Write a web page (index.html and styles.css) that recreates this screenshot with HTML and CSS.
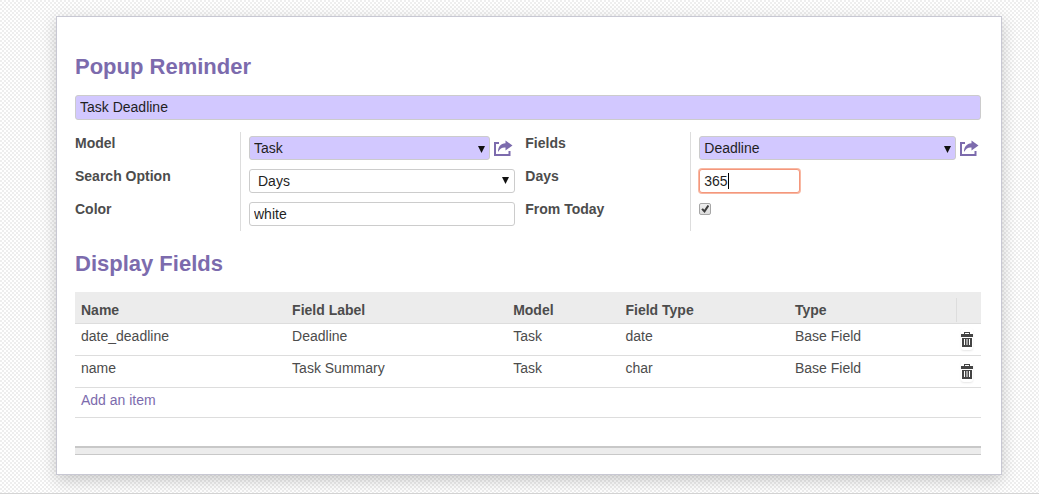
FILE: index.html
```html
<!DOCTYPE html>
<html lang="en">
<head>
<meta charset="utf-8">
<meta name="viewport" content="width=device-width, initial-scale=1">
<title>Popup Reminder</title>
<link rel="stylesheet" href="styles.css">
</head>
<body>
<svg class="symbols" aria-hidden="true">
  <symbol id="share" viewBox="0 0 20 16">
    <path d="M6 3H2v12h14.500v-4" fill="none" stroke="currentColor" stroke-width="2"/>
    <path d="M12.500 0.500L19.500 5.500L12.500 10.500V7.500C9 7.200 7.200 8.500 5 12C4.800 7.500 7.500 3.500 12.500 3.300Z" fill="currentColor"/>
  </symbol>
  <symbol id="trash" viewBox="0 0 12 16">
    <path fill-rule="evenodd" d="M3 1h6v2h3v3H0V3h3zM4 2v1h4V2zM1 7h10v9H1zM3 8v6h1V8zM5.500 8v6h1V8zM8 8v6h1V8z" fill="currentColor"/>
  </symbol>
  <symbol id="arrow" viewBox="0 0 6 6">
    <path d="M0 0h6L3 6z" fill="currentColor"/>
  </symbol>
</svg>
<main class="canvas">
  <form class="sheet">
    <h1 class="heading"><label for="title">Popup Reminder</label></h1>
    <input class="control required title" id="title" type="text" value="Task Deadline">
    <div class="groups">
      <div class="group group-left">
        <div class="labels">
          <label for="model">Model</label>
          <label for="search">Search Option</label>
          <label for="color">Color</label>
        </div>
        <div class="fields">
          <div class="field">
            <div class="select"><select class="control required" id="model"><option>Task</option></select><svg class="arrow low"><use href="#arrow"/></svg></div>
            <button class="open" type="button" aria-label="Open model"><svg class="share"><use href="#share"/></svg></button>
          </div>
          <div class="field">
            <div class="select"><select class="control native" id="search"><option>Days</option></select><svg class="arrow"><use href="#arrow"/></svg></div>
          </div>
          <div class="field"><input class="control" id="color" type="text" value="white"></div>
        </div>
      </div>
      <div class="group group-right">
        <div class="labels">
          <label for="fields">Fields</label>
          <label for="days">Days</label>
          <label for="today">From Today</label>
        </div>
        <div class="fields">
          <div class="field">
            <div class="select"><select class="control required" id="fields"><option>Deadline</option></select><svg class="arrow low"><use href="#arrow"/></svg></div>
            <button class="open" type="button" aria-label="Open field"><svg class="share"><use href="#share"/></svg></button>
          </div>
          <div class="field">
            <div class="number"><input class="control active" id="days" type="text" value="365"><span class="caret"></span></div>
          </div>
          <div class="field"><input class="check" id="today" type="checkbox" checked></div>
        </div>
      </div>
    </div>
    <h2 class="heading">Display Fields</h2>
    <table class="list">
      <colgroup><col class="c-name"><col class="c-label"><col class="c-model"><col class="c-kind"><col class="c-type"><col></colgroup>
      <thead>
        <tr><th>Name</th><th>Field Label</th><th>Model</th><th>Field Type</th><th>Type</th><th class="last"><div class="divider"></div></th></tr>
      </thead>
      <tbody>
        <tr><td>date_deadline</td><td>Deadline</td><td>Task</td><td>date</td><td>Base Field</td><td class="last"><button class="delete" type="button" aria-label="Delete date_deadline"><svg class="trash"><use href="#trash"/></svg></button></td></tr>
        <tr><td>name</td><td>Task Summary</td><td>Task</td><td>char</td><td>Base Field</td><td class="last"><button class="delete" type="button" aria-label="Delete name"><svg class="trash"><use href="#trash"/></svg></button></td></tr>
        <tr class="add"><td colspan="6"><a href="#">Add an item</a></td></tr>
      </tbody>
    </table>
    <div class="footer-bar"></div>
  </form>
</main>
</body>
</html>
```
FILE: styles.css
```css
* { box-sizing: border-box; }
body {
  margin: 0;
  background: #fff;
  color: #4c4c4c;
  font: 14px/22px "Liberation Sans", Arial, sans-serif;
}
.symbols { display: none; }
.canvas {
  padding: 16px 37px 18px 56px;
  border-bottom: 1px solid #d5d5d5;
  background: repeating-conic-gradient(#fff 0 25%, #eee 0 50%) 0 0 / 4px 4px;
}
.sheet {
  padding: 34px 20px 19px 18px;
  border: 1px solid #c8c8d3;
  background: #fff;
  box-shadow: 0 5px 15px rgba(0, 0, 0, .2);
}
.heading {
  margin: 0;
  color: #7c6bad;
  font-size: 22px;
  line-height: 32px;
}
.control {
  display: block;
  width: 100%;
  height: 24px;
  margin: 0;
  padding: 0 4px;
  border: 1px solid #ccc;
  border-radius: 3px;
  outline: 0;
  appearance: none;
  background: #fff;
  color: #1f1f1f;
  font: inherit;
}
.required { background: #d2c8ff; }
.title { height: 25px; margin-top: 12px; padding-bottom: 2px; }
.native { padding-left: 8px; }
.groups { display: flex; margin: 12px 0 17px; }
.group { display: flex; min-width: 0; }
.group-left { width: 49.7%; padding-right: 10px; }
.group-right { flex: 1; }
.labels {
  display: flex;
  flex: 0 0 165px;
  flex-direction: column;
  gap: 11px;
  font-weight: bold;
}
.fields {
  display: flex;
  flex: 1;
  flex-direction: column;
  gap: 9px;
  min-width: 0;
  padding: 4px 0 5px 8px;
  border-left: 1px solid #ddd;
}
.field { display: flex; height: 24px; }
.select { position: relative; flex: 1; }
.arrow {
  position: absolute;
  top: 8px;
  right: 6px;
  width: 7px;
  height: 7px;
  color: #111;
  pointer-events: none;
}
.low { top: 10px; right: 5px; }
.open, .delete { padding: 0; border: 0; background: none; color: #7c6bad; }
.open { width: 25px; padding-left: 3px; }
.share { display: block; width: 20px; height: 16px; }
.number { position: relative; width: 101px; }
.active {
  border-color: #f4977c;
  box-shadow: 0 0 0 1px #f8b8a3;
}
.caret {
  position: absolute;
  top: 4px;
  left: 29px;
  width: 1px;
  height: 16px;
  background: #000;
}
.check {
  display: grid;
  place-items: center;
  width: 12px;
  height: 12px;
  margin: 1px 0 0;
  border: 1px solid #a6a6a6;
  border-radius: 2px;
  appearance: none;
  background: linear-gradient(#eee, #ddd);
}
.check::before {
  width: 8px;
  height: 8px;
  background: #3c3c3c;
  clip-path: polygon(0 55%, 20% 40%, 38% 60%, 78% 0, 100% 12%, 42% 100%);
  content: "";
}
.list {
  width: 100%;
  margin-top: 12px;
  border-collapse: collapse;
  table-layout: fixed;
}
.c-name { width: 23.3%; }
.c-label { width: 24.4%; }
.c-model { width: 12.4%; }
.c-kind { width: 18.7%; }
.c-type { width: 18.4%; }
.list th, .list td {
  height: 32px;
  padding: 1px 6px 8px;
  border-bottom: 1px solid #ddd;
  text-align: left;
  vertical-align: top;
}
.list th { height: 31px; padding: 7px 6px 1px; background: #ececec; }
.list th.last { padding: 6px 0 0; }
.list td.last { padding: 4px 0 0; }
.divider { height: 24px; border-left: 1px solid #ddd; }
.list .add td { height: 30px; padding-bottom: 6px; }
.delete {
  display: flex;
  align-items: center;
  justify-content: center;
  width: 12px;
  height: 22px;
  margin-left: 5px;
  border-radius: 3px;
  box-shadow: 0 1px 2px rgba(0, 0, 0, .1);
  color: #444;
}
.trash { width: 12px; height: 16px; }
a { color: #7c6bad; text-decoration: none; }
.footer-bar {
  height: 9px;
  margin-top: 28px;
  border-top: 2px solid #c8c8c8;
  border-bottom: 1px solid #c8c8c8;
  background: #ececec;
}
```
